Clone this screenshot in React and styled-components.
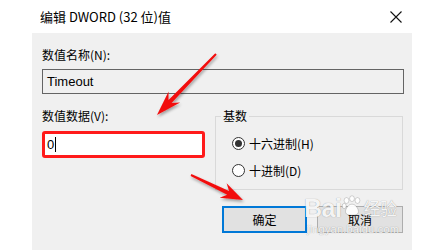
import React from "react";
import styled, { createGlobalStyle } from "styled-components";

const GlobalStyle = createGlobalStyle`
  html, body {
    margin: 0;
    padding: 0;
    background: #fff;
  }
  body {
    font-family: "Noto Sans CJK SC", "Noto Sans", sans-serif;
    font-size: 12px;
    color: #000;
  }
`;

const Window = styled.div`
  position: relative;
  width: 422px;
  height: 250px;
  display: flex;
  flex-direction: column;
  overflow: hidden;
  background: #fff;
`;

const TitleBar = styled.div`
  height: 33px;
  flex: none;
  display: flex;
  align-items: center;
  justify-content: space-between;
  padding: 0 18px 0 40px;
  font-size: 13px;
  line-height: 16px;
`;

const CloseBtn = styled.div`
  width: 16px;
  height: 16px;
  display: flex;
  align-items: center;
  justify-content: center;
`;

const Body = styled.div`
  flex: 1;
  margin: 0 10px 0 32px;
  padding: 14px 8px 0 10px;
  background: #f0f0f0;
  display: flex;
  flex-direction: column;
`;

const Label = styled.div`
  height: 16px;
  line-height: 16px;
`;

const Field = styled.div`
  box-sizing: border-box;
  height: ${(p) => (p.highlight ? 27 : 25)}px;
  margin-top: ${(p) => (p.highlight ? 7 : 6)}px;
  border: ${(p) => (p.highlight ? "3px solid #ff1a1a" : "1px solid #646464")};
  border-radius: ${(p) => (p.highlight ? 3 : 0)}px;
  background: ${(p) => (p.highlight ? "#fff" : "#f0f0f0")};
  padding-left: ${(p) => (p.highlight ? 2 : 4)}px;
  display: flex;
  align-items: center;
  font-family: "Liberation Sans", "Noto Sans CJK SC", sans-serif;
  font-size: 13px;
`;

const Caret = styled.span`
  display: inline-block;
  width: 1px;
  height: 15px;
  background: #000;
  margin-left: 1px;
`;

const Row = styled.div`
  display: flex;
  gap: 10px;
  margin-top: 14px;
`;

const LeftCol = styled.div`
  width: 163px;
  display: flex;
  flex-direction: column;
`;

const Group = styled.fieldset`
  box-sizing: border-box;
  width: 188px;
  height: 82px;
  margin: 0;
  padding: 11px 0 0 16px;
  border: 1px solid #d9d9d9;
  display: flex;
  flex-direction: column;
  gap: 11px;
`;

const Legend = styled.legend`
  padding: 0 2px;
  margin-left: -11px;
  line-height: 16px;
`;

const Radio = styled.div`
  display: flex;
  align-items: center;
  height: 16px;
  gap: 4px;
`;

const Circle = styled.span`
  box-sizing: border-box;
  width: 13px;
  height: 13px;
  border-radius: 50%;
  border: 1px solid #333;
  background: #fff;
  display: flex;
  align-items: center;
  justify-content: center;
  &::after {
    content: "";
    width: 7px;
    height: 7px;
    border-radius: 50%;
    background: ${(p) => (p.checked ? "#333" : "transparent")};
  }
`;

const Buttons = styled.div`
  display: flex;
  justify-content: flex-end;
  gap: 10px;
  margin-top: 16px;
  padding-right: 1px;
`;

const Button = styled.div`
  box-sizing: border-box;
  width: ${(p) => (p.primary ? 85 : 86)}px;
  height: 27px;
  background: #e1e1e1;
  border: ${(p) => (p.primary ? "2px solid #0078d7" : "1px solid #adadad")};
  display: flex;
  align-items: center;
  justify-content: center;
`;

const Overlay = styled.svg`
  position: absolute;
  left: 0;
  top: 0;
  pointer-events: none;
`;

const Watermark = styled.div`
  position: absolute;
  left: 304px;
  top: 193px;
  color: rgba(255, 255, 255, 0.92);
  text-shadow: 0 0 1px rgba(0, 0, 0, 0.4);
  display: flex;
  flex-direction: column;
  pointer-events: none;
`;

const WmTop = styled.div`
  display: flex;
  align-items: center;
  font-family: "Liberation Sans", sans-serif;
  font-weight: bold;
  font-size: 25px;
  line-height: 30px;
  letter-spacing: -0.5px;
`;

const WmCn = styled.span`
  font-family: "Noto Sans CJK SC", sans-serif;
  font-weight: normal;
  font-size: 17px;
`;

const WmUrl = styled.div`
  font-family: "Liberation Sans", sans-serif;
  font-size: 11px;
  line-height: 12px;
  margin-left: 3px;
  letter-spacing: 0.2px;
`;

function arrowPoints(tx, ty, hx, hy, headLen, headHalf, tailHalf, neckHalf) {
  const dx = hx - tx;
  const dy = hy - ty;
  const len = Math.hypot(dx, dy);
  const ux = dx / len;
  const uy = dy / len;
  const nx = -uy;
  const ny = ux;
  const bx = hx - ux * headLen;
  const by = hy - uy * headLen;
  const jx = hx - ux * headLen * 0.75;
  const jy = hy - uy * headLen * 0.75;
  const pts = [
    [tx + nx * tailHalf, ty + ny * tailHalf],
    [jx + nx * neckHalf, jy + ny * neckHalf],
    [bx + nx * headHalf, by + ny * headHalf],
    [hx, hy],
    [bx - nx * headHalf, by - ny * headHalf],
    [jx - nx * neckHalf, jy - ny * neckHalf],
    [tx - nx * tailHalf, ty - ny * tailHalf],
  ];
  return pts.map((p) => p.map((v) => v.toFixed(1)).join(",")).join(" ");
}

const Paw = () => (
  <svg width="22" height="24" viewBox="0 0 24 24" style={{ margin: "-4px 0 0" }}>
    <g fill="rgba(255,255,255,0.92)" stroke="rgba(0,0,0,0.25)" strokeWidth="0.7">
      <ellipse cx="6" cy="6" rx="2.6" ry="3.2" />
      <ellipse cx="12" cy="4" rx="2.6" ry="3.2" />
      <ellipse cx="18" cy="6" rx="2.6" ry="3.2" />
      <ellipse cx="3.5" cy="12" rx="2.2" ry="2.8" />
      <path d="M12 10c-4 0-7 5-7 8s2.5 4 7 4 7-1 7-4-3-8-7-8z" />
    </g>
  </svg>
);

export default function App() {
  return (
    <>
      <GlobalStyle />
      <Window>
        <TitleBar>
          <span>编辑 DWORD (32 位)值</span>
          <CloseBtn>
            <svg width="14" height="14" viewBox="0 0 14 14">
              <path d="M1.5 1.5 L12.5 12.5 M12.5 1.5 L1.5 12.5" stroke="#111" strokeWidth="1.1" />
            </svg>
          </CloseBtn>
        </TitleBar>
        <Body>
          <Label>数值名称(N):</Label>
          <Field>Timeout</Field>
          <Row>
            <LeftCol>
              <Label>数值数据(V):</Label>
              <Field highlight>
                0<Caret />
              </Field>
            </LeftCol>
            <Group>
              <Legend>基数</Legend>
              <Radio>
                <Circle checked />
                十六进制(H)
              </Radio>
              <Radio>
                <Circle />
                十进制(D)
              </Radio>
            </Group>
          </Row>
          <Buttons>
            <Button primary>确定</Button>
            <Button>取消</Button>
          </Buttons>
        </Body>
        <Watermark>
          <WmTop>
            Bai
            <Paw />
            <WmCn>经验</WmCn>
          </WmTop>
          <WmUrl>jingyan.baidu.com</WmUrl>
        </Watermark>
        <Overlay width="422" height="250" viewBox="0 0 422 250">
          <defs>
            <filter id="shadow" x="-20%" y="-20%" width="140%" height="140%">
              <feGaussianBlur in="SourceAlpha" stdDeviation="1.5" />
              <feOffset dx="1" dy="2" result="b" />
              <feComponentTransfer>
                <feFuncA type="linear" slope="0.35" />
              </feComponentTransfer>
              <feMerge>
                <feMergeNode />
                <feMergeNode in="SourceGraphic" />
              </feMerge>
            </filter>
          </defs>
          <g fill="#f21010" filter="url(#shadow)">
            <polygon points={arrowPoints(216, 54, 157, 115, 25, 8, 1, 2.2)} />
            <polygon points={arrowPoints(191, 175, 243, 200, 22, 8, 1, 2.2)} />
          </g>
        </Overlay>
      </Window>
    </>
  );
}
